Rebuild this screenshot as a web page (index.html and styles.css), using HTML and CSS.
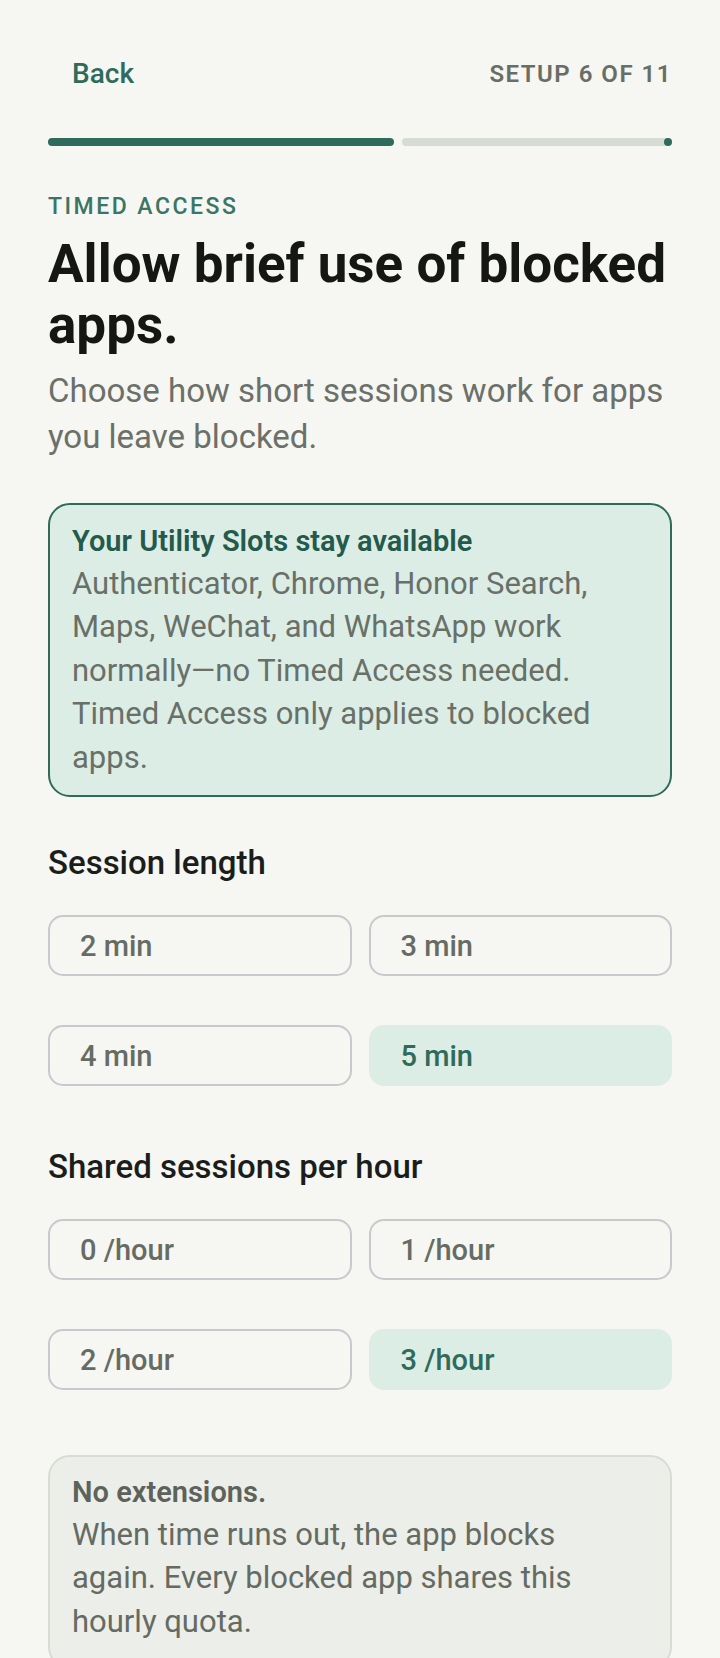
FILE: index.html
```html
<!DOCTYPE html>
<html lang="en">
<head>
    <meta charset="UTF-8">
    <meta name="viewport" content="width=device-width, initial-scale=1.0">
    <title>Setup - Timed Access</title>
    <link rel="stylesheet" href="styles.css">
</head>
<body>
    <div class="page">
        <!-- Top bar with back link and step counter -->
        <div class="top-bar">
            <button class="back-button">Back</button>
            <span class="step-count">SETUP 6 OF 11</span>
        </div>

        <div class="progress">
            <div class="progress-fill" style="width: 55.4%"></div>
            <div class="progress-track"><span class="progress-stop"></span></div>
        </div>

        <p class="eyebrow">TIMED ACCESS</p>
        <h1 class="title">Allow brief use of blocked apps.</h1>
        <p class="subtitle">Choose how short sessions work for apps you leave blocked.</p>

        <div class="info-card">
            <p class="info-title">Your Utility Slots stay available</p>
            <p class="info-text">Authenticator, Chrome, Honor Search, Maps, WeChat, and WhatsApp work normally—no Timed Access needed. Timed Access only applies to blocked apps.</p>
        </div>

        <h2 class="section-label">Session length</h2>
        <div class="option-grid">
            <button class="option">2 min</button>
            <button class="option">3 min</button>
            <button class="option">4 min</button>
            <button class="option selected">5 min</button>
        </div>

        <h2 class="section-label second">Shared sessions per hour</h2>
        <div class="option-grid">
            <button class="option">0 /hour</button>
            <button class="option">1 /hour</button>
            <button class="option">2 /hour</button>
            <button class="option selected">3 /hour</button>
        </div>

        <div class="note-card">
            <p class="note-title">No extensions.</p>
            <p class="note-text">When time runs out, the app blocks again. Every blocked app shares this hourly quota.</p>
        </div>
    </div>
</body>
</html>
```

FILE: styles.css
```css
/* Page background and base font */
html, body {
    margin: 0;
    padding: 0;
    background-color: #f6f6f2;
    font-family: Roboto, "Noto Sans", sans-serif;
}

.page {
    padding: 52px 48px 0;
}

p, h1, h2 {
    margin: 0;
}

/* Top bar */
.top-bar {
    display: flex;
    justify-content: space-between;
    align-items: center;
    height: 44px;
}

.back-button {
    background: transparent;
    border: none;
    padding: 0 24px;
    font-family: inherit;
    font-size: 28px;
    font-weight: 500;
    line-height: 44px;
    color: #2e6b5a;
    cursor: pointer;
}

.step-count {
    font-size: 24px;
    font-weight: 600;
    letter-spacing: 1.5px;
    color: #686e66;
    line-height: 44px;
}

/* Progress bar with gap and stop dot */
.progress {
    display: flex;
    gap: 8px;
    height: 8px;
    margin-top: 42px;
}

.progress-fill {
    background-color: #2e6b5a;
    border-radius: 4px;
}

.progress-track {
    flex: 1;
    display: flex;
    justify-content: flex-end;
    background-color: #d6dbd3;
    border-radius: 4px;
}

.progress-stop {
    width: 8px;
    height: 8px;
    border-radius: 50%;
    background-color: #2e6b5a;
}

/* Heading block */
.eyebrow {
    margin-top: 47px;
    font-size: 23px;
    font-weight: 500;
    letter-spacing: 2.5px;
    line-height: 28px;
    color: #3a7565;
}

.title {
    margin-top: 13px;
    font-size: 53px;
    font-weight: 700;
    line-height: 61px;
    color: #151713;
}

.subtitle {
    margin-top: 12px;
    font-size: 33px;
    line-height: 46px;
    color: #6b7068;
}

/* Green info card */
.info-card {
    margin-top: 43px;
    padding: 15px 32px 16px 22px;
    border: 2px solid #2e6b5a;
    border-radius: 22px;
    background-color: #dcede5;
}

.info-title {
    font-size: 29px;
    font-weight: 600;
    line-height: 42px;
    color: #245a4b;
}

.info-text {
    font-size: 31px;
    line-height: 43.4px;
    color: #697068;
}

/* Option sections */
.section-label {
    margin-top: 46px;
    font-size: 33px;
    font-weight: 500;
    line-height: 40px;
    color: #1b1d1a;
}

.section-label.second {
    margin-top: 61px;
}

.option-grid {
    display: grid;
    grid-template-columns: 1fr 1fr;
    column-gap: 17px;
    row-gap: 49px;
    margin-top: 32px;
}

.option {
    height: 61px;
    padding: 0 30px;
    border: 2px solid #cac8cd;
    border-radius: 15px;
    background-color: transparent;
    font-family: inherit;
    font-size: 29px;
    font-weight: 500;
    text-align: left;
    color: #666c63;
    cursor: pointer;
}

.option.selected {
    border-color: #dcede5;
    background-color: #dcede5;
    color: #2e6b5a;
}

/* Grey note card at the bottom */
.note-card {
    margin-top: 65px;
    padding: 14px 32px 24px 22px;
    border: 2px solid #d9dcd5;
    border-radius: 22px;
    background-color: #eceee9;
}

.note-title {
    font-size: 29px;
    font-weight: 600;
    line-height: 42px;
    color: #5d635b;
}

.note-text {
    font-size: 31px;
    line-height: 43.4px;
    color: #656b62;
}
```
